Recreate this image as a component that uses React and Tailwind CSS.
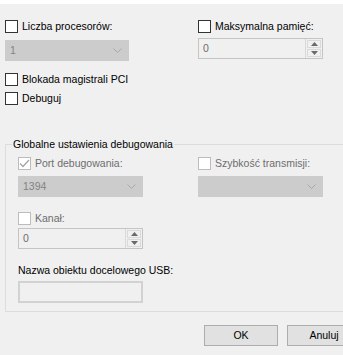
import React from 'react';

function Box({ checked, disabled }) {
  return (
    <span
      className={`flex h-[13px] w-[13px] shrink-0 items-center justify-center border bg-white ${
        disabled ? 'border-[#bcbcbc]' : 'border-[#333333]'
      }`}
    >
      {checked && (
        <svg width="11" height="9" viewBox="0 0 11 9">
          <polyline points="1,4.5 4,7.5 10,1" fill="none" stroke="#a5a5a5" strokeWidth="1.3" />
        </svg>
      )}
    </span>
  );
}

function Check({ label, checked, disabled }) {
  return (
    <div className="flex h-[13px] items-center gap-[4px]">
      <Box checked={checked} disabled={disabled} />
      <span className={`leading-none ${disabled ? 'text-[#6d6d6d]' : 'text-[#000000]'}`}>{label}</span>
    </div>
  );
}

function Combo({ value, width }) {
  return (
    <div className={`flex h-[21px] items-center justify-between border border-[#cccccc] bg-[#cccccc] pl-[4px] pr-[6px] ${width}`}>
      <span className="text-[#838383]">{value}</span>
      <svg width="9" height="5" viewBox="0 0 9 5">
        <polyline points="0.5,0.5 4.5,4.5 8.5,0.5" fill="none" stroke="#a8a8a8" strokeWidth="1" />
      </svg>
    </div>
  );
}

function Spin({ value, width }) {
  return (
    <div className={`flex h-[21px] border border-[#c4c4c4] bg-[#f0f0f0] ${width}`}>
      <div className="flex flex-1 items-center pl-[4px] text-[#6d6d6d]">{value}</div>
      <div className="flex w-[17px] flex-col gap-[1px] border-l border-[#d9d9d9] p-[1px]">
        <div className="flex flex-1 items-center justify-center border border-[#dadada]">
          <svg width="7" height="4" viewBox="0 0 7 4">
            <polygon points="0,4 3.5,0 7,4" fill="#6a6a6a" />
          </svg>
        </div>
        <div className="flex flex-1 items-center justify-center border border-[#dadada]">
          <svg width="7" height="4" viewBox="0 0 7 4">
            <polygon points="0,0 3.5,4 7,0" fill="#6a6a6a" />
          </svg>
        </div>
      </div>
    </div>
  );
}

export default function App() {
  return (
    <div className="h-[355px] w-[343px] overflow-hidden bg-[#f0f0f0] font-['Liberation_Sans',Arial,sans-serif] text-[10.5px]">
      <div className="h-[4px] bg-white" />

      <div className="mt-[16px] flex pl-[5px]">
        <div className="w-[193px]">
          <Check label="Liczba procesorów:" />
          <div className="mt-[7px]">
            <Combo value="1" width="w-[124px]" />
          </div>
        </div>
        <div>
          <Check label="Maksymalna pamięć:" />
          <div className="mt-[5px]">
            <Spin value="0" width="w-[125px]" />
          </div>
        </div>
      </div>

      <div className="mt-[12px] pl-[5px]">
        <Check label="Blokada magistrali PCI" />
        <div className="mt-[6px]">
          <Check label="Debuguj" />
        </div>
      </div>

      <fieldset className="mt-[31px] ml-[5px] w-[360px] border border-[#dcdcdc] pb-[8px] pl-[12px]">
        <legend className="-ml-[6px] h-[16px] px-[1px] leading-[16px] text-black">Globalne ustawienia debugowania</legend>
        <div className="mt-[5px] flex">
          <div className="w-[180px]">
            <Check label="Port debugowania:" checked disabled />
            <div className="mt-[6px]">
              <Combo value="1394" width="w-[125px]" />
            </div>
            <div className="mt-[15px]">
              <Check label="Kanał:" disabled />
            </div>
            <div className="mt-[3px]">
              <Spin value="0" width="w-[125px]" />
            </div>
          </div>
          <div>
            <Check label="Szybkość transmisji:" disabled />
            <div className="mt-[6px]">
              <Combo value="" width="w-[125px]" />
            </div>
          </div>
        </div>
        <div className="mt-[13px] h-[16px] leading-[16px] text-black">Nazwa obiektu docelowego USB:</div>
        <div className="mt-[3px] h-[22px] w-[125px] border-2 border-[#d2d2d2] bg-[#f0f0f0]" />
      </fieldset>

      <div className="mt-[13px] flex gap-[9px] pl-[204px]">
        <button className="h-[21px] w-[74px] shrink-0 border border-[#adadad] bg-[#e1e1e1] text-black">OK</button>
        <button className="h-[21px] w-[74px] shrink-0 border border-[#adadad] bg-[#e1e1e1] text-black">Anuluj</button>
      </div>
    </div>
  );
}
